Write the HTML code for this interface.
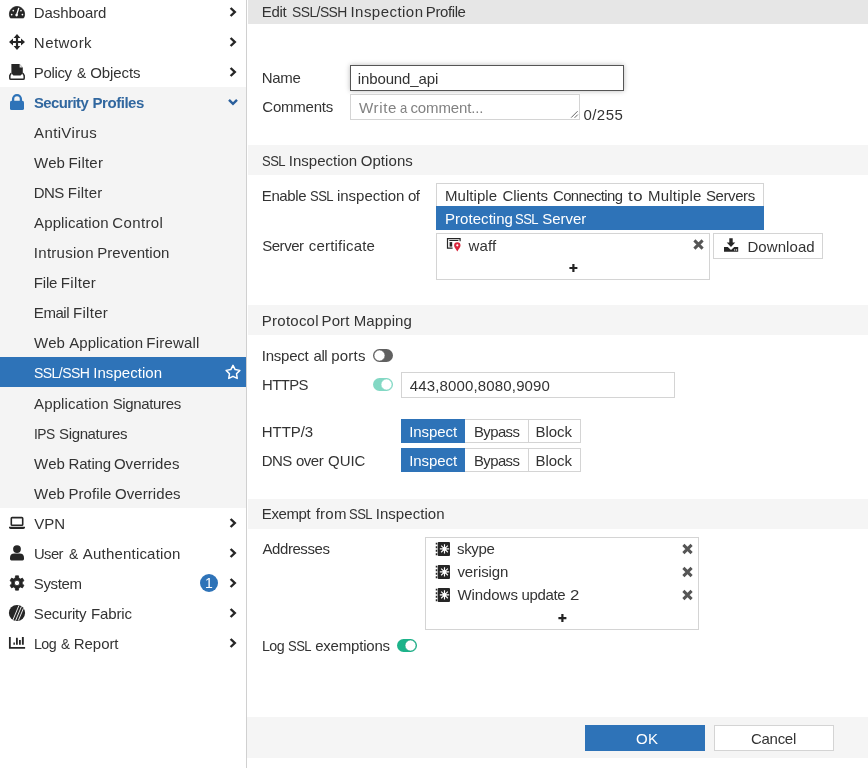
<!DOCTYPE html>
<html lang="en">
<head>
<meta charset="utf-8">
<title>Edit SSL/SSH Inspection Profile</title>
<style>
*{box-sizing:border-box}
html,body{margin:0;padding:0}
body{width:868px;height:768px;overflow:hidden;position:relative;background:#fff;
 font-family:"Liberation Sans",sans-serif;font-size:15px;color:#333}
.w{display:inline-block;transform-origin:0 0;white-space:pre}
.t{position:absolute;transform-origin:0 0;white-space:pre;line-height:20px;height:20px;font-size:15px}
.abs,svg.i{position:absolute}
svg.i{overflow:visible}
/* sidebar */
#nav{will-change:transform;position:absolute;left:0;top:0;width:246px;height:768px;background:#fff}
#nav .open{position:absolute;left:0;top:87px;width:246px;height:421px;background:#f4f4f4}
#nav .sel{position:absolute;left:0;top:357px;width:246px;height:30px;background:#2e73b8}
#split{position:absolute;left:246px;top:0;width:1px;height:768px;background:#d0d0d0}
/* main */
main{will-change:transform;position:absolute;left:0;top:0;width:868px;height:768px}
.band{position:absolute;left:248px;width:620px;background:#f5f5f5}
.box{position:absolute;background:#fff;border:1px solid #d4d4d4}
.blue{background:#2e73b8}
</style>
</head>
<body>

<!-- ================= SIDEBAR ================= -->
<nav id="nav">
 <div class="open"></div>
 <div class="sel"></div>

 <!-- top level entries -->
 <svg class="i" style="left:0;top:0" width="246" height="768" viewBox="0 0 246 768" aria-hidden="true">
<path d="M10.4 17.9 A7.6 7.6 0 1 1 23.6 17.9 Z" fill="#262626" stroke="#262626" stroke-width=".8" stroke-linejoin="round"/>
<g fill="#fff"><circle cx="11.7" cy="14.6" r=".85"/><circle cx="13.3" cy="10.6" r=".85"/><circle cx="21" cy="10.6" r=".85"/><circle cx="22.4" cy="14.6" r=".85"/><circle cx="16.6" cy="15.1" r="1.3"/></g>
<path d="M16.5 15.2 L18.7 8.3" stroke="#fff" stroke-width="1.3" stroke-linecap="round"/>
<path fill="#262626" d="M17 34 L20.4 38 H18.1 V40.9 H21 V38.6 L25 42 L21 45.4 V43.1 H18.1 V46 H20.4 L17 50 L13.6 46 H15.9 V43.1 H13 V45.4 L9 42 L13 38.6 V40.9 H15.9 V38 H13.6 Z"/>
<path fill="#262626" d="M11.4 64 H19.6 L22.8 67.4 V73.2 L20.6 75.6 H13.4 L11.4 73.2 Z"/>
<path fill="#ddd" d="M19.6 64 L22.8 67.4 H19.6 Z"/>
<path fill="none" stroke="#262626" stroke-width="1.5" stroke-linejoin="round" d="M11.2 73.6 H10.9 L9.8 75.6 V78.2 Q9.8 79.3 10.9 79.3 H23.1 Q24.2 79.3 24.2 78.2 V75.6 L23.1 73.6 H22.8"/>
<rect x="10" y="100.8" width="14" height="9.2" rx="1.6" fill="#2e73b8"/>
<path d="M13.1 101.5 V99.1 a3.9 3.9 0 0 1 7.8 0 V101.5" fill="none" stroke="#2e73b8" stroke-width="2.3"/>
<rect x="11.3" y="517.6" width="11.4" height="7.6" rx=".8" fill="none" stroke="#262626" stroke-width="1.6"/>
<path fill="#262626" d="M9 526.8 H25 V527.6 Q25 529 23.4 529 H10.6 Q9 529 9 527.6 Z"/>
<circle cx="17" cy="549.1" r="3.9" fill="#262626"/>
<path fill="#262626" d="M10 559 V558 Q10 553.6 14.4 553.6 H19.6 Q24 553.6 24 558 V559 Q24 560.4 22.6 560.4 H11.4 Q10 560.4 10 559 Z"/>
<path fill="#262626" fill-rule="evenodd" stroke="#262626" stroke-width=".8" stroke-linejoin="round" d="M15.31 577.98 L15.48 575.86 L18.52 575.86 L18.69 577.98 L20.50 579.02 L22.42 578.12 L23.94 580.74 L22.20 581.95 L22.20 584.05 L23.94 585.26 L22.42 587.88 L20.50 586.98 L18.69 588.02 L18.52 590.14 L15.48 590.14 L15.31 588.02 L13.50 586.98 L11.58 587.88 L10.06 585.26 L11.80 584.05 L11.80 581.95 L10.06 580.74 L11.58 578.12 L13.50 579.02Z M19.7 583 a2.7 2.7 0 1 0 -5.4 0 a2.7 2.7 0 1 0 5.4 0Z"/>
<circle cx="17" cy="613" r="8.1" fill="#262626"/>
<path d="M12.9 620 L18.9 605.6 M15.6 620.6 L21.4 606.6 M18.4 620.4 L23.4 608.4" stroke="#fff" stroke-width=".9"/>
<path d="M9.85 637.1 V647.95 H25.1" fill="none" stroke="#262626" stroke-width="1.8"/>
<path fill="#262626" d="M13.4 642.4h1.5v2.4h-1.5z M16 637.8h1.8v7h-1.8z M19 640.1h1.8v4.7h-1.8z M21.9 637.1h1.9v7.7h-1.9z"/>
<path d="M230.6 8 L234.8 12 L230.6 16" fill="none" stroke="#262626" stroke-width="2.4"/>
<path d="M230.6 38 L234.8 42 L230.6 46" fill="none" stroke="#262626" stroke-width="2.4"/>
<path d="M230.6 68 L234.8 72 L230.6 76" fill="none" stroke="#262626" stroke-width="2.4"/>
<path d="M230.6 519 L234.8 523 L230.6 527" fill="none" stroke="#262626" stroke-width="2.4"/>
<path d="M230.6 549 L234.8 553 L230.6 557" fill="none" stroke="#262626" stroke-width="2.4"/>
<path d="M230.6 579 L234.8 583 L230.6 587" fill="none" stroke="#262626" stroke-width="2.4"/>
<path d="M230.6 609 L234.8 613 L230.6 617" fill="none" stroke="#262626" stroke-width="2.4"/>
<path d="M230.6 639 L234.8 643 L230.6 647" fill="none" stroke="#262626" stroke-width="2.4"/>
<path d="M229 99.9 L233 103.9 L237 99.9" fill="none" stroke="#2a5f9c" stroke-width="2.4"/>
<path d="M233.00 365.40 L235.17 369.61 L239.85 370.38 L236.52 373.74 L237.23 378.42 L233.00 376.30 L228.77 378.42 L229.48 373.74 L226.15 370.38 L230.83 369.61Z" fill="none" stroke="#fff" stroke-width="1.5" stroke-linejoin="round"/>
<circle cx="209" cy="583" r="9" fill="#2e73b8"/>
</svg>
<span class="t" style="left:200px;top:573px;width:18px;text-align:center;color:#fff;font-size:14px">1</span>
 <span class="t" style="left:33.85px;top:2.65px;letter-spacing:-0.106px;">Dashboard</span>
 <span class="t" style="left:33.85px;top:32.65px;letter-spacing:0.458px;">Network</span>
 <span class="t" style="left:33.85px;top:62.65px;"><span class="w" style="letter-spacing:-0.370px;">Policy</span> <span class="w" style="margin-left:1.03px;transform:scaleX(0.9189);">&amp;</span> <span class="w" style="margin-left:-0.87px;letter-spacing:-0.083px;">Objects</span></span>
 <span class="t" style="left:33.60px;top:92.65px;font-weight:700;color:#31679f"><span class="w" style="letter-spacing:-0.600px;transform:scaleX(0.9945);">Security</span> <span class="w" style="margin-left:0.33px;letter-spacing:-0.457px;">Profiles</span></span>
 <span class="t" style="left:34.10px;top:122.65px;letter-spacing:0.356px;">AntiVirus</span>
 <span class="t" style="left:34.10px;top:152.65px;"><span class="w" style="letter-spacing:0.150px;">Web</span> <span class="w" style="margin-left:-0.85px;letter-spacing:0.230px;">Filter</span></span>
 <span class="t" style="left:33.85px;top:182.65px;"><span class="w" style="letter-spacing:-0.575px;">DNS</span> <span class="w" style="margin-left:-0.21px;letter-spacing:0.230px;">Filter</span></span>
 <span class="t" style="left:34.10px;top:212.65px;"><span class="w" style="letter-spacing:0.110px;">Application</span> <span class="w" style="margin-left:-0.62px;letter-spacing:0.383px;">Control</span></span>
 <span class="t" style="left:33.85px;top:242.65px;"><span class="w" style="letter-spacing:0.269px;">Intrusion</span> <span class="w" style="margin-left:-0.73px;letter-spacing:0.056px;">Prevention</span></span>
 <span class="t" style="left:33.85px;top:272.65px;"><span class="w" style="letter-spacing:-0.183px;">File</span> <span class="w" style="margin-left:-0.61px;letter-spacing:0.330px;">Filter</span></span>
 <span class="t" style="left:33.85px;top:302.65px;"><span class="w" style="letter-spacing:-0.463px;">Email</span> <span class="w" style="margin-left:-0.17px;letter-spacing:0.270px;">Filter</span></span>
 <span class="t" style="left:34.10px;top:332.65px;"><span class="w" style="letter-spacing:0.150px;">Web</span> <span class="w" style="margin-left:-0.10px;letter-spacing:0.050px;">Application</span> <span class="w" style="margin-left:-1.06px;letter-spacing:0.214px;">Firewall</span></span>
 <span class="t" style="left:33.90px;top:362.85px;color:#fff"><span class="w" style="letter-spacing:-0.600px;transform:scaleX(0.9367);">SSL/SSH</span> <span class="w" style="margin-left:-3.99px;letter-spacing:0.039px;">Inspection</span></span>
 <span class="t" style="left:34.10px;top:393.75px;"><span class="w" style="letter-spacing:0.110px;">Application</span> <span class="w" style="margin-left:-0.22px;letter-spacing:-0.356px;">Signatures</span></span>
 <span class="t" style="left:33.95px;top:423.75px;"><span class="w" style="letter-spacing:-0.600px;transform:scaleX(0.9216);">IPS</span> <span class="w" style="margin-left:-1.45px;letter-spacing:-0.367px;">Signatures</span></span>
 <span class="t" style="left:34.10px;top:453.75px;"><span class="w" style="letter-spacing:0.150px;">Web</span> <span class="w" style="margin-left:-0.85px;letter-spacing:-0.140px;">Rating</span> <span class="w" style="margin-left:-1.29px;letter-spacing:0.069px;">Overrides</span></span>
 <span class="t" style="left:34.10px;top:483.75px;"><span class="w" style="letter-spacing:0.150px;">Web</span> <span class="w" style="margin-left:-0.85px;letter-spacing:0.075px;">Profile</span> <span class="w" style="margin-left:-0.62px;letter-spacing:0.056px;">Overrides</span></span>
 <span class="t" style="left:34.35px;top:513.75px;letter-spacing:-0.075px;">VPN</span>
 <span class="t" style="left:33.87px;top:543.75px;"><span class="w" style="letter-spacing:-0.600px;transform:scaleX(0.9877);">User</span> <span class="w" style="margin-left:1.24px;transform:scaleX(0.9189);">&amp;</span> <span class="w" style="margin-left:0.08px;letter-spacing:0.196px;">Authentication</span></span>
 <span class="t" style="left:33.85px;top:573.75px;letter-spacing:-0.370px;">System</span>
 <span class="t" style="left:33.85px;top:603.75px;"><span class="w" style="letter-spacing:-0.221px;">Security</span> <span class="w" style="margin-left:0.62px;letter-spacing:-0.140px;">Fabric</span></span>
 <span class="t" style="left:33.91px;top:633.75px;"><span class="w" style="letter-spacing:-0.600px;transform:scaleX(0.9513);">Log</span> <span class="w" style="margin-left:-0.66px;transform:scaleX(0.8973);">&amp;</span> <span class="w" style="margin-left:-1.08px;letter-spacing:-0.050px;">Report</span></span>
</nav>
<div id="split"></div>

<!-- ================= MAIN ================= -->
<main>
 <div class="band" style="top:0;height:24px;background:#e6e6e6"></div>
 <span class="t" style="left:261.85px;top:2.15px;"><span class="w" style="letter-spacing:-0.367px;">Edit</span> <span class="w" style="margin-left:1.80px;letter-spacing:-0.600px;transform:scaleX(0.9263);">SSL/SSH</span> <span class="w" style="margin-left:-5.10px;letter-spacing:0.461px;">Inspection</span> <span class="w" style="margin-left:-1.77px;letter-spacing:-0.408px;">Profile</span></span>

 <span class="t" style="left:261.65px;top:67.85px;letter-spacing:-0.250px;">Name</span>
<div class="box" style="left:350px;top:65px;width:274px;height:26px;border-color:#555;box-shadow:0 0 5px rgba(0,0,0,.28)"></div>
<span class="t" style="left:357.80px;top:68.95px;letter-spacing:-0.125px;">inbound_api</span>
<span class="t" style="left:262.25px;top:97.15px;letter-spacing:-0.207px;">Comments</span>
<div class="box" style="left:350px;top:94px;width:230px;height:26px"></div>
<span class="t" style="left:359.20px;top:98.05px;color:#828282"><span class="w" style="letter-spacing:0.600px;transform:scaleX(1.0055);">Write</span> <span class="w" style="margin-left:-1.27px;transform:scaleX(0.8700);">a</span> <span class="w" style="margin-left:-1.90px;letter-spacing:-0.122px;">comment...</span></span>
<svg class="i" style="left:0;top:0" width="868" height="768" viewBox="0 0 868 768" aria-hidden="true"><path d="M571.2 117.6 L577.6 111.2 M574.6 117.8 L577.8 114.6" stroke="#555" stroke-width=".9"/></svg>
<span class="t" style="left:583.40px;top:104.75px;letter-spacing:0.475px;">0/255</span>

 <div class="band" style="top:145px;height:30px"></div>
 <span class="t" style="left:261.52px;top:150.65px;"><span class="w" style="letter-spacing:-0.600px;transform:scaleX(0.8700);">SSL</span> <span class="w" style="margin-left:-3.40px;letter-spacing:-0.006px;">Inspection</span> <span class="w" style="margin-left:-0.70px;letter-spacing:0.083px;">Options</span></span>
 <span class="t" style="left:261.75px;top:186.05px;"><span class="w" style="letter-spacing:-0.370px;">Enable</span> <span class="w" style="margin-left:-0.39px;letter-spacing:-0.600px;transform:scaleX(0.8700);">SSL</span> <span class="w" style="margin-left:-3.85px;letter-spacing:-0.011px;">inspection</span> <span class="w" style="margin-left:-0.60px;letter-spacing:-0.500px;">of</span></span>
<div class="box" style="left:436px;top:183px;width:328px;height:24px"></div>
<span class="t" style="left:445.05px;top:185.85px;"><span class="w" style="letter-spacing:0.036px;">Multiple</span> <span class="w" style="margin-left:1.26px;letter-spacing:-0.050px;">Clients</span> <span class="w" style="margin-left:0.53px;letter-spacing:-0.600px;transform:scaleX(0.9935);">Connecting</span> <span class="w" style="margin-left:1.39px;letter-spacing:0.600px;transform:scaleX(1.1200);">to</span> <span class="w" style="margin-left:1.96px;letter-spacing:0.250px;">Multiple</span> <span class="w" style="margin-left:0.15px;letter-spacing:-0.400px;">Servers</span></span>
<div class="abs blue" style="left:436px;top:206px;width:328px;height:24px"></div>
<span class="t" style="left:445.05px;top:208.65px;color:#fff"><span class="w" style="letter-spacing:0.039px;">Protecting</span> <span class="w" style="margin-left:-1.68px;letter-spacing:-0.600px;transform:scaleX(0.8700);">SSL</span> <span class="w" style="margin-left:-3.95px;letter-spacing:-0.050px;">Server</span></span>
<span class="t" style="left:262.15px;top:235.65px;"><span class="w" style="letter-spacing:-0.450px;">Server</span> <span class="w" style="margin-left:1.05px;letter-spacing:0.185px;">certificate</span></span>
<div class="box" style="left:436px;top:233px;width:274px;height:47px"></div>
<div class="box" style="left:713px;top:233px;width:110px;height:26px"></div>
<svg class="i" style="left:0;top:0" width="868" height="768" viewBox="0 0 868 768" aria-hidden="true">
<path d="M452.6 248.2 H447.5 V238.7 H460.1 V241.2" fill="none" stroke="#262626" stroke-width="1.2"/>
<path d="M449.3 240.5 H458.4" stroke="#262626" stroke-width="1"/>
<rect x="449.6" y="242.1" width="2.6" height="4.5" fill="#262626"/>
<path d="M457.3 251.5 C455.6 248.4 454.1 247 454.1 245.4 a3.2 3.2 0 0 1 6.4 0 C460.5 247 459 248.4 457.3 251.5Z" fill="#d9263c"/><circle cx="457.3" cy="245.3" r="1.1" fill="#fff"/>
<path d="M694.4 240.4 L702.6 248.6 M702.6 240.4 L694.4 248.6" stroke="#555" stroke-width="3.0" fill="none"/>
<path d="M569.4 268 H577.4 M573.4 264 V272" stroke="#222" stroke-width="2.2" fill="none"/>
<path fill="#262626" d="M729.3 238.2 h3.4 v4.2 h2.5 L731 246.9 L726.7 242.4 h2.6 Z"/>
<path fill="#262626" d="M724 247 h3.8 L731 250 L734.2 247 H738.2 v4.7 H724 Z"/>
<rect x="734.3" y="249.2" width=".9" height="1.5" fill="#fff"/><rect x="736.2" y="249.2" width=".9" height="1.5" fill="#fff"/>
</svg>
<span class="t" style="left:468.50px;top:235.65px;letter-spacing:0.150px;">waff</span>
<span class="t" style="left:747.45px;top:236.85px;letter-spacing:0.071px;">Download</span>

 <div class="band" style="top:305px;height:30px"></div>
 <span class="t" style="left:261.85px;top:310.55px;"><span class="w" style="letter-spacing:0.236px;">Protocol</span> <span class="w" style="margin-left:-1.38px;letter-spacing:0.083px;">Port</span> <span class="w" style="margin-left:0.18px;letter-spacing:0.092px;">Mapping</span></span>
 <span class="t" style="left:261.85px;top:346.05px;"><span class="w" style="letter-spacing:-0.267px;">Inspect</span> <span class="w" style="margin-left:1.02px;letter-spacing:-0.425px;">all</span> <span class="w" style="margin-left:-0.26px;letter-spacing:0.238px;">ports</span></span>
<span class="t" style="left:261.86px;top:374.85px;letter-spacing:-0.600px;transform:scaleX(0.9922);">HTTPS</span>
<div class="box" style="left:401px;top:372px;width:274px;height:26px"></div>
<span class="t" style="left:409.85px;top:375.95px;letter-spacing:0.144px;">443,8000,8080,9090</span>
<svg class="i" style="left:0;top:0" width="868" height="768" viewBox="0 0 868 768" aria-hidden="true"><rect x="373" y="349" width="20" height="13" rx="6.5" fill="#606060"/><circle cx="379.5" cy="355.5" r="5.4" fill="#fff" stroke="#606060" stroke-width=".5"/><rect x="373" y="378" width="20" height="13" rx="6.5" fill="#83d8c4"/><circle cx="386.5" cy="384.5" r="5.4" fill="#fff" stroke="#83d8c4" stroke-width=".5"/></svg>
<div class="box" style="left:401px;top:419px;width:180px;height:24px"></div>
<div class="abs blue" style="left:401px;top:419px;width:64px;height:24px"></div>
<div class="abs" style="left:528px;top:419px;width:1px;height:24px;background:#d4d4d4"></div>
<span class="t" style="left:409.25px;top:421.75px;letter-spacing:-0.083px;color:#fff">Inspect</span>
<span class="t" style="left:473.76px;top:421.75px;letter-spacing:-0.600px;transform:scaleX(0.9933);">Bypass</span>
<span class="t" style="left:535.45px;top:421.75px;">Block</span>
<div class="box" style="left:401px;top:448px;width:180px;height:24px"></div>
<div class="abs blue" style="left:401px;top:448px;width:64px;height:24px"></div>
<div class="abs" style="left:528px;top:448px;width:1px;height:24px;background:#d4d4d4"></div>
<span class="t" style="left:409.25px;top:451.05px;letter-spacing:-0.083px;color:#fff">Inspect</span>
<span class="t" style="left:473.76px;top:451.05px;letter-spacing:-0.600px;transform:scaleX(0.9933);">Bypass</span>
<span class="t" style="left:535.45px;top:451.05px;">Block</span>
<span class="t" style="left:261.85px;top:421.75px;letter-spacing:-0.070px;">HTTP/3</span>
<span class="t" style="left:261.85px;top:451.05px;"><span class="w" style="letter-spacing:-0.575px;">DNS</span> <span class="w" style="margin-left:0.04px;letter-spacing:-0.500px;">over</span> <span class="w" style="margin-left:0.70px;letter-spacing:-0.033px;">QUIC</span></span>

 <div class="band" style="top:499px;height:30px"></div>
 <span class="t" style="left:261.85px;top:504.05px;"><span class="w" style="letter-spacing:-0.400px;">Exempt</span> <span class="w" style="margin-left:1.17px;letter-spacing:0.250px;">from</span> <span class="w" style="margin-left:-1.74px;letter-spacing:-0.600px;transform:scaleX(0.8700);">SSL</span> <span class="w" style="margin-left:-4.15px;letter-spacing:0.061px;">Inspection</span></span>
 <span class="t" style="left:262.50px;top:539.25px;letter-spacing:-0.431px;">Addresses</span>
<div class="box" style="left:425px;top:537px;width:274px;height:93px"></div>
<svg class="i" style="left:0;top:0" width="868" height="768" viewBox="0 0 868 768" aria-hidden="true">
<rect x="437.7" y="542" width="12.3" height="14" rx="1" fill="#262626"/>
<path d="M436.5 542.7 V556" stroke="#262626" stroke-width="1.5" stroke-dasharray="1.9 1.65"/>
<path d="M445.50 548.90 L449.20 548.90 M445.21 549.61 L447.82 552.22 M444.50 549.90 L444.50 553.60 M443.79 549.61 L441.18 552.22 M443.50 548.90 L439.80 548.90 M443.79 548.19 L441.18 545.58 M444.50 547.90 L444.50 544.20 M445.21 548.19 L447.82 545.58 " stroke="#fff" stroke-width="1.15"/><circle cx="444.5" cy="548.9" r="1.9" fill="#fff"/>
<path d="M683.4 544.9 L691.6 553.1 M691.6 544.9 L683.4 553.1" stroke="#555" stroke-width="3.0" fill="none"/>
<rect x="437.7" y="565" width="12.3" height="14" rx="1" fill="#262626"/>
<path d="M436.5 565.7 V579" stroke="#262626" stroke-width="1.5" stroke-dasharray="1.9 1.65"/>
<path d="M445.50 571.90 L449.20 571.90 M445.21 572.61 L447.82 575.22 M444.50 572.90 L444.50 576.60 M443.79 572.61 L441.18 575.22 M443.50 571.90 L439.80 571.90 M443.79 571.19 L441.18 568.58 M444.50 570.90 L444.50 567.20 M445.21 571.19 L447.82 568.58 " stroke="#fff" stroke-width="1.15"/><circle cx="444.5" cy="571.9" r="1.9" fill="#fff"/>
<path d="M683.4 567.9 L691.6 576.1 M691.6 567.9 L683.4 576.1" stroke="#555" stroke-width="3.0" fill="none"/>
<rect x="437.7" y="588" width="12.3" height="14" rx="1" fill="#262626"/>
<path d="M436.5 588.7 V602" stroke="#262626" stroke-width="1.5" stroke-dasharray="1.9 1.65"/>
<path d="M445.50 594.90 L449.20 594.90 M445.21 595.61 L447.82 598.22 M444.50 595.90 L444.50 599.60 M443.79 595.61 L441.18 598.22 M443.50 594.90 L439.80 594.90 M443.79 594.19 L441.18 591.58 M444.50 593.90 L444.50 590.20 M445.21 594.19 L447.82 591.58 " stroke="#fff" stroke-width="1.15"/><circle cx="444.5" cy="594.9" r="1.9" fill="#fff"/>
<path d="M683.4 590.9 L691.6 599.1 M691.6 590.9 L683.4 599.1" stroke="#555" stroke-width="3.0" fill="none"/>
<path d="M558.4 618.1 H566.4 M562.4 614.1 V622.1" stroke="#222" stroke-width="2.2" fill="none"/>
<rect x="397" y="639" width="20" height="13" rx="6.5" fill="#1db38a"/><circle cx="410.5" cy="645.5" r="5.4" fill="#fff" stroke="#159a76" stroke-width=".5"/>
</svg>
<span class="t" style="left:457.00px;top:539.25px;letter-spacing:-0.350px;">skype</span>
<span class="t" style="left:457.50px;top:562.25px;letter-spacing:-0.136px;">verisign</span>
<span class="t" style="left:457.40px;top:585.25px;"><span class="w" style="letter-spacing:-0.058px;">Windows</span> <span class="w" style="margin-left:-0.42px;letter-spacing:-0.370px;">update</span> <span class="w" style="margin-left:0.54px;transform:scaleX(1.1200);">2</span></span>
<span class="t" style="left:262.41px;top:635.65px;"><span class="w" style="letter-spacing:-0.600px;transform:scaleX(0.9513);">Log</span> <span class="w" style="margin-left:-1.84px;letter-spacing:-0.600px;transform:scaleX(0.8700);">SSL</span> <span class="w" style="margin-left:-3.55px;letter-spacing:-0.200px;">exemptions</span></span>

 <div class="band" style="left:247px;width:621px;top:717px;height:41px"></div>
 <div class="abs blue" style="left:585px;top:725px;width:120px;height:26px"></div>
<span class="t" style="left:636.05px;top:729.15px;letter-spacing:0.250px;color:#fff">OK</span>
<div class="box" style="left:714px;top:725px;width:120px;height:26px"></div>
<span class="t" style="left:751.05px;top:729.15px;letter-spacing:-0.300px;">Cancel</span>
</main>
</body>
</html>
